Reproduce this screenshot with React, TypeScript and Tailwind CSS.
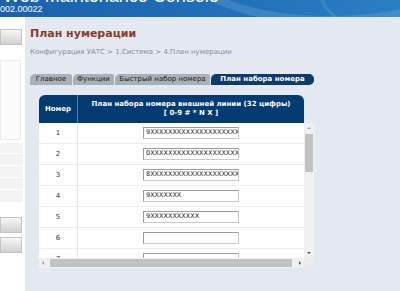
import React from 'react';

const rows = [
  { n: 1, v: '9XXXXXXXXXXXXXXXXXXXXXXXXX' },
  { n: 2, v: '0XXXXXXXXXXXXXXXXXXXXXXXXX' },
  { n: 3, v: '8XXXXXXXXXXXXXXXXXXXXXXXXX' },
  { n: 4, v: '9XXXXXXX' },
  { n: 5, v: '9XXXXXXXXXXX' },
  { n: 6, v: '' },
  { n: 7, v: '' },
];

const tabs = [
  { label: 'Главное', w: 'w-[42px]' },
  { label: 'Функции', w: 'w-[41px]' },
  { label: 'Быстрый набор номера', w: 'w-[95px]' },
];

function SideButton() {
  return (
    <div className="h-[16px] w-[22px] border border-[#c4c4c4] bg-gradient-to-b from-[#f6f6f6] to-[#d2d2d2]" />
  );
}

function Sidebar() {
  return (
    <div className="w-[25px] shrink-0 bg-white pt-[12px]">
      <SideButton />
      <div className="mt-[15px] h-[80px] w-[21px] border border-[#ececec] bg-[#fbfbfb]" />
      <div className="mt-[3px] flex flex-col gap-[1px]">
        <div className="h-[10px] w-[23px] bg-[#f3f3f3]" />
        <div className="h-[11px] w-[23px] bg-[#f3f3f3]" />
        <div className="h-[11px] w-[23px] bg-[#f3f3f3]" />
        <div className="h-[11px] w-[23px] bg-[#f3f3f3]" />
        <div className="h-[12px] w-[23px] bg-[#f3f3f3]" />
      </div>
      <div className="mt-[15px] flex flex-col gap-[4px]">
        <SideButton />
        <SideButton />
      </div>
    </div>
  );
}

export default function App() {
  return (
    <div
      className="flex h-[291px] w-[400px] flex-col overflow-hidden bg-white"
      style={{ fontFamily: '"DejaVu Sans", Verdana, sans-serif' }}
    >
      {/* Top banner */}
      <div className="relative h-[17px] shrink-0 overflow-hidden bg-gradient-to-r from-[#1a62ac] via-[#1f6db6] to-[#2a7fc4]">
        <svg className="absolute inset-0" width="400" height="17" viewBox="0 0 400 17">
          <ellipse cx="330" cy="-40" rx="150" ry="60" fill="none" stroke="#ffffff" strokeOpacity="0.12" strokeWidth="8" />
          <ellipse cx="380" cy="-10" rx="60" ry="40" fill="none" stroke="#ffffff" strokeOpacity="0.1" strokeWidth="3" />
        </svg>
        <div
          className="relative mt-[-13px] ml-[3px] whitespace-nowrap text-[18px] leading-[18px] text-white"
          style={{ fontFamily: '"Liberation Sans", Arial, sans-serif' }}
        >
          Web Maintenance Console
        </div>
        <div
          className="relative ml-[0px] mt-[-1px] text-[9px] leading-[10px] text-white"
          style={{ fontFamily: '"Liberation Sans", Arial, sans-serif' }}
        >
          002.00022
        </div>
      </div>

      <div className="flex flex-1">
        <Sidebar />

        <div className="flex-1 bg-[#e4e8f0] pl-[5px] pt-[10px]">
          <h1 className="text-[11px] font-bold leading-[14px] text-[#8a3a2e]">План нумерации</h1>
          <p className="mt-[7px] whitespace-nowrap text-[7px] leading-[9px] text-[#8a8a8a]">
            Конфигурация УАТС &gt; 1.Система &gt; 4.План нумерации
          </p>

          {/* Tabs */}
          <div className="mt-[17px] flex h-[11px] items-stretch">
            {tabs.map((t) => (
              <div
                key={t.label}
                className={`${t.w} mr-[1px] flex items-center justify-center rounded-tl-[5px] rounded-tr-[2px] bg-[#a9b0b8] text-[7px] leading-none text-[#1c1c1c]`}
              >
                {t.label}
              </div>
            ))}
            <div className="flex w-[103px] items-center justify-center rounded-t-[5px] rounded-br-[5px] bg-[#0c3b6c] text-[7px] font-bold leading-none text-white">
              План набора номера
            </div>
          </div>

          {/* Table */}
          <div className="ml-[9px] mt-[10px] w-[275px]">
            <div className="flex h-[28px] w-[265px] rounded-t-[6px] bg-[#023a72] text-[7px] font-bold text-white">
              <div className="flex w-[39px] items-center justify-center border-r border-[#5d7fa6]">Номер</div>
              <div className="flex flex-1 flex-col items-center justify-center leading-[9px]">
                <span>План набора номера внешней линии (32 цифры)</span>
                <span>[ 0-9 # * N X ]</span>
              </div>
            </div>

            <div className="flex">
              <div className="h-[135px] w-[265px] overflow-hidden bg-white">
                {rows.map((r) => (
                  <div key={r.n} className="flex h-[21px] border-b border-[#e9edf3]">
                    <div className="flex w-[39px] items-center justify-center border-r border-[#e3e9f1] text-[7px] text-[#333]">
                      {r.n}
                    </div>
                    <div className="flex flex-1 items-center justify-center">
                      <div className="flex h-[12px] w-[96px] items-center overflow-hidden whitespace-nowrap border border-[#9c9c9c] border-r-[#c8c8c8] border-b-[#c8c8c8] bg-white pl-[2px] text-[6.5px] text-[#222]">
                        {r.v}
                      </div>
                    </div>
                  </div>
                ))}
              </div>
              {/* vertical scrollbar */}
              <div className="relative h-[135px] w-[10px] bg-[#f0f0f0]">
                <div className="absolute left-[3px] top-[4px] h-0 w-0 border-x-[2px] border-b-[2px] border-x-transparent border-b-[#a0a0a0]" />
                <div className="absolute left-[1px] top-[11px] h-[38px] w-[8px] bg-[#c2c2c2]" />
                <div className="absolute bottom-[4px] left-[3px] h-0 w-0 border-x-[2px] border-t-[2px] border-x-transparent border-t-[#505050]" />
              </div>
            </div>

            {/* horizontal scrollbar */}
            <div className="flex h-[10px]">
              <div className="relative w-[265px] bg-[#f0f0f0]">
                <div className="absolute left-[3px] top-[3px] h-0 w-0 border-y-[2px] border-r-[2px] border-y-transparent border-r-[#a0a0a0]" />
                <div className="absolute left-[11px] top-[1px] h-[8px] w-[242px] bg-[#c2c2c2]" />
                <div className="absolute right-[3px] top-[3px] h-0 w-0 border-y-[2px] border-l-[2px] border-y-transparent border-l-[#505050]" />
              </div>
              <div className="w-[10px] bg-[#ebebeb]" />
            </div>
          </div>
        </div>
      </div>
    </div>
  );
}
